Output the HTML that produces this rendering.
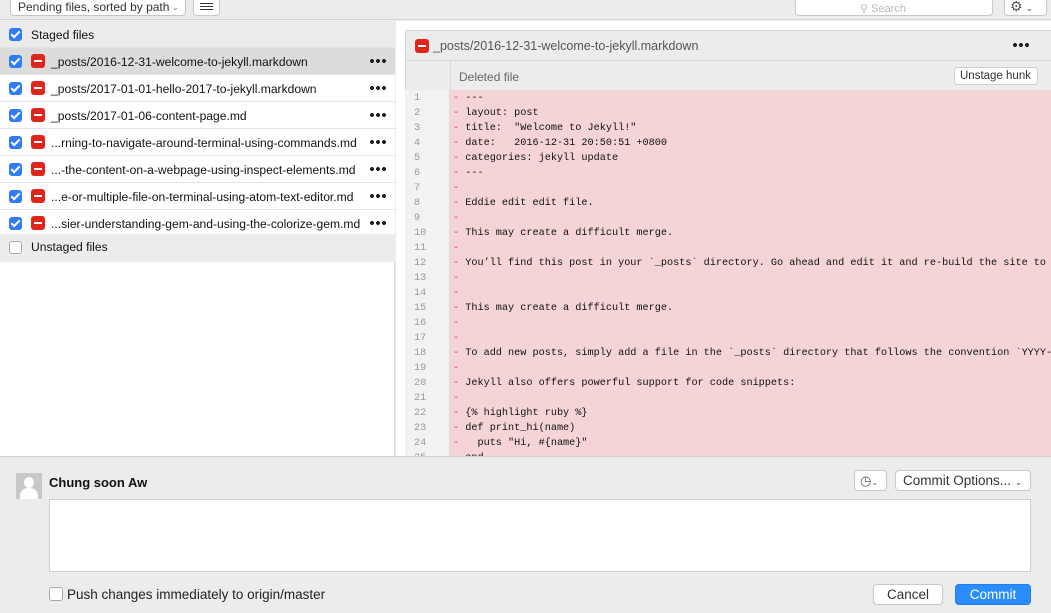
<!DOCTYPE html>
<html><head><style>
*{box-sizing:border-box;margin:0;padding:0}
body{width:1051px;height:613px;overflow:hidden;background:#ececec;font-family:"Liberation Sans",sans-serif;font-size:12px;color:#222;position:relative}
.abs{position:absolute}
.top{left:0;top:0;width:1051px;height:20px;background:#ececec;border-bottom:1px solid #d0d0d0}
.btn{position:absolute;background:#fff;border:1px solid #c8c8c8;border-radius:4px;font-size:12px;color:#333}
.left{left:0;top:21px;width:395px;height:435px;background:#fff;border-right:1px solid #d6d6d6}
.row{position:absolute;left:0;width:395px;height:27px;border-bottom:1px solid #e4e4e4;background:#fff}
.cb{position:absolute;left:9px;top:7px;width:13px;height:13px;border-radius:3px;background:#2f7cf6}
.cb:after{content:"";position:absolute;left:4px;top:1px;width:3px;height:7px;border:solid #fff;border-width:0 2px 2px 0;transform:rotate(45deg)}
.cbe{position:absolute;width:13px;height:13px;border-radius:3px;background:#fff;border:1px solid #aaa}
.del{position:absolute;left:31px;top:6px;width:14px;height:14px;border-radius:3px;background:#e0261c}
.del:after{content:"";position:absolute;left:3px;top:6px;width:8px;height:2px;background:#fff}
.fn{position:absolute;left:51px;top:7px;font-size:12.1px;color:#111;white-space:nowrap}
.dots{position:absolute;left:370px;top:11px;width:16px;height:4px;background:radial-gradient(circle at 2px 2px,#222 1.9px,transparent 2.1px) 0 0/6px 4px repeat-x}
.right{left:396px;top:21px;width:655px;height:435px;background:#fff}
.code{position:absolute;left:450px;top:90px;width:601px;height:366px;background:#f4d4d4;overflow:hidden}
.gut{position:absolute;left:405px;top:90px;width:45px;height:366px;background:#f2f2f2;border-right:1px solid #ddd;overflow:hidden}
.ln{font-family:"Liberation Mono",monospace;font-size:10.2px;line-height:15px;white-space:pre}
</style></head><body>
<div class="abs top">
 <div class="btn" style="left:10px;top:-2px;width:176px;height:18px;padding:1px 7px;border-color:#c4c4c4;font-size:12px">Pending files, sorted by path <span style="color:#888;font-size:9px;position:absolute;right:6px;top:3px">&#8964;</span></div>
 <div class="btn" style="left:193px;top:-2px;width:27px;height:18px"><div style="position:absolute;left:6px;top:4px;width:13px;height:7px;border-top:1px solid #333;border-bottom:1px solid #333"></div><div style="position:absolute;left:6px;top:7px;width:13px;height:1px;background:#333"></div></div>
 <div class="btn" style="left:795px;top:-4px;width:198px;height:20px;color:#bbb;font-size:11px;padding:5px 0 0 64px">&#9906; Search</div>
 <div class="btn" style="left:1004px;top:-4px;width:43px;height:20px;color:#555;font-size:14px;padding:1px 0 0 5px">&#9881;<span style="font-size:9px;margin-left:3px">&#8964;</span></div>
</div>
<div class="abs left">
 <div class="row" style="top:0;background:#ececec;height:27px"><div class="cb"></div><div class="fn" style="left:31px">Staged files</div></div>
 <div class="row" style="top:27px;background:#dcdcdc"><div class="cb"></div><div class="del"></div><div class="fn">_posts/2016-12-31-welcome-to-jekyll.markdown</div><div class="dots"></div></div>
 <div class="row" style="top:54px"><div class="cb"></div><div class="del"></div><div class="fn">_posts/2017-01-01-hello-2017-to-jekyll.markdown</div><div class="dots"></div></div>
 <div class="row" style="top:81px"><div class="cb"></div><div class="del"></div><div class="fn">_posts/2017-01-06-content-page.md</div><div class="dots"></div></div>
 <div class="row" style="top:108px"><div class="cb"></div><div class="del"></div><div class="fn">...rning-to-navigate-around-terminal-using-commands.md</div><div class="dots"></div></div>
 <div class="row" style="top:135px"><div class="cb"></div><div class="del"></div><div class="fn">...-the-content-on-a-webpage-using-inspect-elements.md</div><div class="dots"></div></div>
 <div class="row" style="top:162px"><div class="cb"></div><div class="del"></div><div class="fn">...e-or-multiple-file-on-terminal-using-atom-text-editor.md</div><div class="dots"></div></div>
 <div class="row" style="top:189px"><div class="cb"></div><div class="del"></div><div class="fn">...sier-understanding-gem-and-using-the-colorize-gem.md</div><div class="dots"></div></div>
 <div class="row" style="top:213px;background:#ececec;height:28px;border:none"><div class="cbe" style="left:9px;top:7px"></div><div class="fn" style="left:31px;top:6px">Unstaged files</div></div>
</div>
<div class="abs right"></div>
<div class="abs" style="left:405px;top:30px;width:646px;height:31px;background:#ececec;border:1px solid #d8d8d8;border-right:none">
 <div class="del" style="left:9px;top:8px"></div>
 <div class="fn" style="left:27px;top:8px;color:#555;font-size:12.5px">_posts/2016-12-31-welcome-to-jekyll.markdown</div>
 <div class="dots" style="left:607px;top:12px"></div>
</div>
<div class="abs" style="left:405px;top:61px;width:646px;height:29px;background:#ececec;border-left:1px solid #d8d8d8">
 <div style="position:absolute;left:44px;top:0;width:1px;height:29px;background:#d8d8d8"></div>
 <div class="fn" style="left:53px;top:9px;color:#666;font-size:12px">Deleted file</div>
 <div class="btn" style="left:548px;top:6px;width:84px;height:18px;font-size:11.5px;padding:2px 0 0 5px;border-color:#d0d0d0">Unstage hunk</div>
</div>
<div class="gut"><div class="ln" style="color:#999;padding:1px 0 0 9px">1
2
3
4
5
6
7
8
9
10
11
12
13
14
15
16
17
18
19
20
21
22
23
24
25</div></div>
<div class="code"><div class="ln" style="color:#111;padding:1px 0 0 3px"><span style="color:#c33">-</span> ---
<span style="color:#c33">-</span> layout: post
<span style="color:#c33">-</span> title:  "Welcome to Jekyll!"
<span style="color:#c33">-</span> date:   2016-12-31 20:50:51 +0800
<span style="color:#c33">-</span> categories: jekyll update
<span style="color:#c33">-</span> ---
<span style="color:#c33">-</span>
<span style="color:#c33">-</span> Eddie edit edit file.
<span style="color:#c33">-</span>
<span style="color:#c33">-</span> This may create a difficult merge.
<span style="color:#c33">-</span>
<span style="color:#c33">-</span> You’ll find this post in your `_posts` directory. Go ahead and edit it and re-build the site to see your changes.
<span style="color:#c33">-</span>
<span style="color:#c33">-</span>
<span style="color:#c33">-</span> This may create a difficult merge.
<span style="color:#c33">-</span>
<span style="color:#c33">-</span>
<span style="color:#c33">-</span> To add new posts, simply add a file in the `_posts` directory that follows the convention `YYYY-MM-DD-name`
<span style="color:#c33">-</span>
<span style="color:#c33">-</span> Jekyll also offers powerful support for code snippets:
<span style="color:#c33">-</span>
<span style="color:#c33">-</span> {% highlight ruby %}
<span style="color:#c33">-</span> def print_hi(name)
<span style="color:#c33">-</span>   puts "Hi, #{name}"
<span style="color:#c33">-</span> end</div></div>
<div class="abs" style="left:0;top:456px;width:1051px;height:157px;background:#ececec;border-top:1px solid #d4d4d4">
 <div style="position:absolute;left:16px;top:16px;width:26px;height:26px;background:#c8c8c8;overflow:hidden"><div style="position:absolute;left:8px;top:4px;width:10px;height:11px;border-radius:50%;background:#fff"></div><div style="position:absolute;left:4px;top:15px;width:18px;height:14px;border-radius:8px 8px 0 0;background:#fff"></div></div>
 <div style="position:absolute;left:49px;top:18px;font-weight:bold;font-size:13px;color:#111">Chung soon Aw</div>
 <div class="btn" style="left:854px;top:13px;width:33px;height:21px;padding:2px 0 0 5px;font-size:13px;color:#555">&#9719;<span style="font-size:8px">&#8964;</span></div>
 <div class="btn" style="left:895px;top:13px;width:136px;height:21px;padding:2px 0 0 7px;font-size:13.5px;color:#333">Commit Options... <span style="font-size:9px;color:#555">&#8964;</span></div>
 <div style="position:absolute;left:49px;top:42px;width:982px;height:73px;background:#fff;border:1px solid #d0d0d0"></div>
 <div class="cbe" style="left:49px;top:130px;width:14px;height:14px"></div>
 <div style="position:absolute;left:67px;top:130px;font-size:13.5px;color:#222">Push changes immediately to origin/master</div>
 <div class="btn" style="left:873px;top:127px;width:70px;height:21px;text-align:center;padding-top:2px;font-size:13.5px">Cancel</div>
 <div class="btn" style="left:955px;top:127px;width:76px;height:21px;text-align:center;padding-top:2px;font-size:13.5px;background:#2b8cfb;border-color:#1f7ef0;color:#fff">Commit</div>
</div>
</body></html>
